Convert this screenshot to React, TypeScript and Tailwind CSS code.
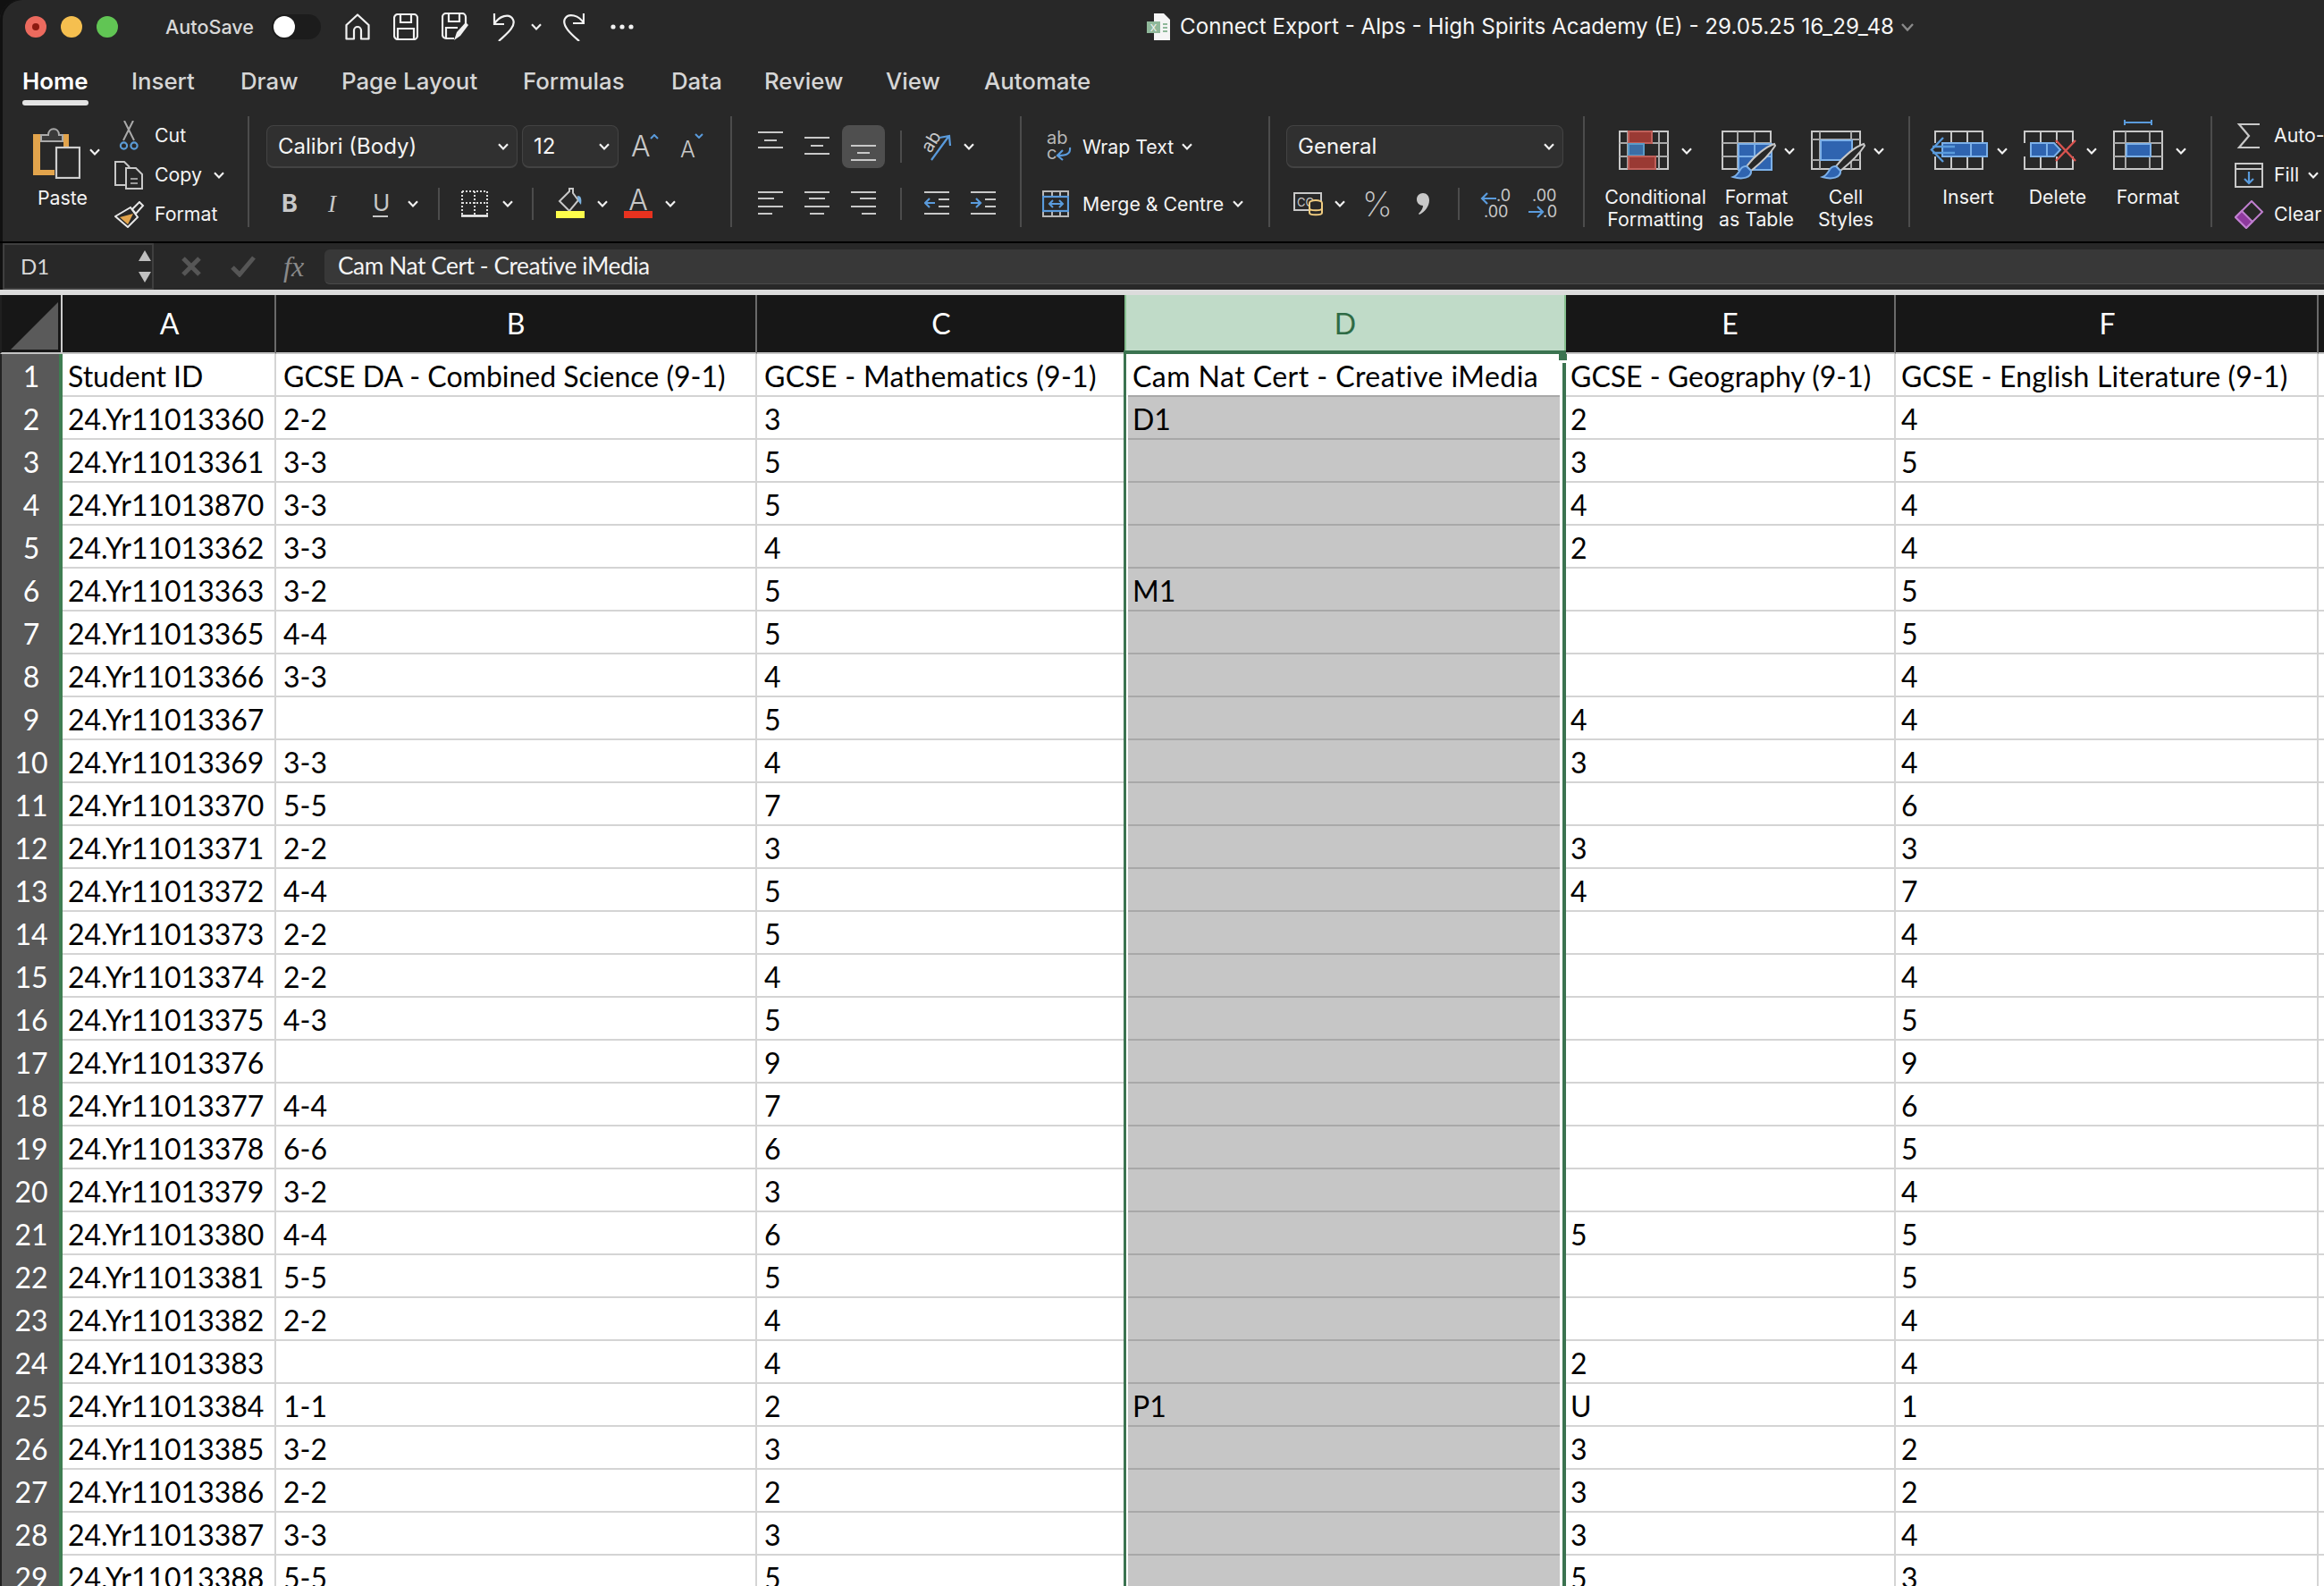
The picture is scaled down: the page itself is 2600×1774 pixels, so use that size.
import React from 'react'

const GREEN = 'border-[#3b7350]'

type Row = [string, string, string, string, string, string]

const rows: Row[] = [
  ['Student ID', 'GCSE DA - Combined Science (9-1)', 'GCSE - Mathematics (9-1)', 'Cam Nat Cert - Creative iMedia', 'GCSE - Geography (9-1)', 'GCSE - English Literature (9-1)'],
  ['24.Yr11013360', '2-2', '3', 'D1', '2', '4'],
  ['24.Yr11013361', '3-3', '5', '', '3', '5'],
  ['24.Yr11013870', '3-3', '5', '', '4', '4'],
  ['24.Yr11013362', '3-3', '4', '', '2', '4'],
  ['24.Yr11013363', '3-2', '5', 'M1', '', '5'],
  ['24.Yr11013365', '4-4', '5', '', '', '5'],
  ['24.Yr11013366', '3-3', '4', '', '', '4'],
  ['24.Yr11013367', '', '5', '', '4', '4'],
  ['24.Yr11013369', '3-3', '4', '', '3', '4'],
  ['24.Yr11013370', '5-5', '7', '', '', '6'],
  ['24.Yr11013371', '2-2', '3', '', '3', '3'],
  ['24.Yr11013372', '4-4', '5', '', '4', '7'],
  ['24.Yr11013373', '2-2', '5', '', '', '4'],
  ['24.Yr11013374', '2-2', '4', '', '', '4'],
  ['24.Yr11013375', '4-3', '5', '', '', '5'],
  ['24.Yr11013376', '', '9', '', '', '9'],
  ['24.Yr11013377', '4-4', '7', '', '', '6'],
  ['24.Yr11013378', '6-6', '6', '', '', '5'],
  ['24.Yr11013379', '3-2', '3', '', '', '4'],
  ['24.Yr11013380', '4-4', '6', '', '5', '5'],
  ['24.Yr11013381', '5-5', '5', '', '', '5'],
  ['24.Yr11013382', '2-2', '4', '', '', '4'],
  ['24.Yr11013383', '', '4', '', '2', '4'],
  ['24.Yr11013384', '1-1', '2', 'P1', 'U', '1'],
  ['24.Yr11013385', '3-2', '3', '', '3', '2'],
  ['24.Yr11013386', '2-2', '2', '', '3', '2'],
  ['24.Yr11013387', '3-3', '3', '', '3', '4'],
  ['24.Yr11013388', '5-5', '5', '', '5', '3'],
]

const tabs = [
  { label: 'Home', className: 'ml-[25px] w-[74px] font-semibold text-white' },
  { label: 'Insert', className: 'ml-[48px] w-[71px]' },
  { label: 'Draw', className: 'ml-[51px] w-[63px]' },
  { label: 'Page Layout', className: 'ml-[50px] w-[151px]' },
  { label: 'Formulas', className: 'ml-[52px] w-[114px]' },
  { label: 'Data', className: 'ml-[52px] w-[56px]' },
  { label: 'Review', className: 'ml-[48px] w-[87px]' },
  { label: 'View', className: 'ml-[49px] w-[59px]' },
  { label: 'Automate', className: 'ml-[51px] w-[119px]' },
]

function Chev({ className }: { className?: string }) {
  return (
    <svg width="12" height="8" viewBox="0 0 12 8" className={`shrink-0 ${className ?? ''}`}>
      <path d="M1 1.2 6 6.4 11 1.2" stroke="#f2f2f2" strokeWidth="2.2" fill="none" />
    </svg>
  )
}

function Sep({ className }: { className?: string }) {
  return <div className={`w-[2px] h-[36px] shrink-0 bg-[#4c4c4c] ${className ?? ''}`} />
}

function Combo({ label, className }: { label: string; className: string }) {
  return (
    <div className={`h-[48px] flex items-center justify-between rounded-lg bg-[#303030] border border-[#434343] border-b-2 ${className}`}>
      <span className="text-[24px] text-[#f4f4f4]">{label}</span>
      <Chev />
    </div>
  )
}

function AlignTop({ ys }: { ys: number[] }) {
  return (
    <svg width="28" height="48" viewBox="0 0 28 48" className="shrink-0">
      <path d={`M0 ${ys[0]}H28M7 ${ys[1]}H21M0 ${ys[2]}H28`} stroke="#c8c8c8" strokeWidth="2.2" />
    </svg>
  )
}

function AlignH({ kind }: { kind: 'left' | 'center' | 'right' }) {
  const d = {
    left: 'M0 5H28M0 12H18M0 21H28M0 29H16',
    center: 'M0 5H28M5 12H23M0 21H28M6 29H22',
    right: 'M0 5H28M10 12H28M0 21H28M12 29H28',
  }[kind]
  return (
    <svg width="28" height="36" viewBox="0 0 28 36" className="shrink-0">
      <path d={d} stroke="#c8c8c8" strokeWidth="2.2" />
    </svg>
  )
}

function Indent({ flip }: { flip?: boolean }) {
  return (
    <svg width="28" height="36" viewBox="0 0 28 36" className="shrink-0">
      <path d="M0 5H28M16 13H28M16 21H28M0 29H28" stroke="#c8c8c8" strokeWidth="2.2" />
      <path d={flip ? 'M0 17H11M6 12l5 5-5 5' : 'M12 17H1M6 12l-5 5 5 5'} stroke="#5a9bdc" strokeWidth="2.2" fill="none" />
    </svg>
  )
}

function TableIcon({ children, w = 56, v = [18, 37], h = [14, 29] }: { children?: React.ReactNode; w?: number; v?: number[]; h?: number[] }) {
  return (
    <svg width={w} height="44" viewBox={`0 0 ${w} 44`} className="shrink-0 overflow-visible">
      <rect x="1" y="1" width={w - 2} height="42" fill="none" stroke="#c8c8c8" strokeWidth="2" />
      {v.map((x) => (
        <path key={x} d={`M${x} 1V43`} stroke="#a8a8a8" strokeWidth="2" />
      ))}
      {h.map((y) => (
        <path key={y} d={`M1 ${y}H${w - 1}`} stroke="#a8a8a8" strokeWidth="2" />
      ))}
      {children}
    </svg>
  )
}

function Brush() {
  return (
    <g>
      <path d="M59 15C50 18 37 28 28 40L33 45C43 37 55 25 60 17Z" fill="#282828" stroke="#c8c8c8" strokeWidth="2" />
      <path d="M28 40C20 39 21 49 13 52C23 55 34 53 33 45Z" fill="#2f64b0" stroke="#7cb0e8" strokeWidth="2" />
    </g>
  )
}

function CondIcon() {
  return (
    <TableIcon v={[10, 27, 45]}>
      <rect x="11" y="1" width="26" height="13" fill="#9a3a34" stroke="#c0605a" strokeWidth="2" />
      <rect x="11" y="15" width="17" height="13" fill="#3b6ea5" stroke="#5a9bc8" strokeWidth="2" />
      <rect x="11" y="29" width="30" height="14" fill="#9a3a34" stroke="#c0605a" strokeWidth="2" />
    </TableIcon>
  )
}

function TableStyleIcon() {
  return (
    <TableIcon>
      <rect x="19" y="15" width="37" height="29" fill="#2f64b0" stroke="#7cb0e8" strokeWidth="2" />
      <path d="M37 15V44M19 29H56" stroke="#7cb0e8" strokeWidth="2" />
      <Brush />
    </TableIcon>
  )
}

function CellStyleIcon() {
  return (
    <TableIcon v={[10, 45]} h={[10, 33]}>
      <rect x="11" y="11" width="35" height="22" fill="#2f64b0" stroke="#7cb0e8" strokeWidth="2" />
      <Brush />
    </TableIcon>
  )
}

function InsertIcon() {
  return (
    <svg width="64" height="44" viewBox="0 0 64 44" className="shrink-0 overflow-visible">
      <path d="M5 14V1H58V14M5 29V43H58V29M23 1V14M41 1V14M23 29V43M41 29V43" fill="none" stroke="#c8c8c8" strokeWidth="2" />
      <rect x="13" y="14" width="50" height="15" fill="#2f64b0" stroke="#7cb0e8" strokeWidth="2" />
      <path d="M45 14V29" stroke="#7cb0e8" strokeWidth="2" />
      <path d="M14 8 1 21.5 14 35" fill="none" stroke="#5a9bdc" strokeWidth="2.4" />
      <path d="M2 18H27M2 25H27" stroke="#5a9bdc" strokeWidth="2.4" />
    </svg>
  )
}

function DeleteIcon() {
  return (
    <svg width="60" height="44" viewBox="0 0 60 44" className="shrink-0 overflow-visible">
      <path d="M1 14V1H55V14M1 29V43H55V29M19 1V14M37 1V14M19 29V43M37 29V43" fill="none" stroke="#c8c8c8" strokeWidth="2" />
      <path d="M8 14H34L41 21.5 34 29H8Z" fill="#2f64b0" stroke="#7cb0e8" strokeWidth="2" />
      <path d="M26 14V29" stroke="#7cb0e8" strokeWidth="2" />
      <path d="M36 11 58 34M58 11 36 34" stroke="#d9534f" strokeWidth="2.4" />
    </svg>
  )
}

function FormatCellIcon() {
  return (
    <TableIcon v={[14, 41]}>
      <rect x="15" y="15" width="27" height="14" fill="#2f64b0" stroke="#7cb0e8" strokeWidth="2" />
      <path d="M13 -9H43M13 -12V-6M43 -12V-6" stroke="#5a9bdc" strokeWidth="2" />
    </TableIcon>
  )
}

function LargeLabel({ lines }: { lines: string[] }) {
  return (
    <div className="text-[21.3px] leading-[25px] text-[#f4f4f4] text-center whitespace-nowrap">
      {lines.map((l) => (
        <div key={l}>{l}</div>
      ))}
    </div>
  )
}

function TitleBar() {
  return (
    <div className="h-[60px] flex items-center shrink-0">
      <div className="ml-[28px] flex gap-4">
        <div className="w-6 h-6 rounded-full bg-[#ec6a5e] flex items-center justify-center">
          <div className="w-2 h-2 rounded-full bg-[#8c1a10]" />
        </div>
        <div className="w-6 h-6 rounded-full bg-[#f5bf4f]" />
        <div className="w-6 h-6 rounded-full bg-[#61c554]" />
      </div>
      <span className="ml-[53px] w-[100px] text-[21.6px] font-medium text-[#d8d8d8] whitespace-nowrap">AutoSave</span>
      <div className="ml-[19px] w-[55px] h-[28px] rounded-full bg-[#1c1c1c] flex items-center pl-[2px]">
        <div className="w-6 h-6 rounded-full bg-white" />
      </div>
      <svg width="28" height="30" viewBox="0 0 28 30" className="ml-[27px]">
        <path d="M1.5 28.5V13L14 1.5 26.5 13V28.5H18V19a4 4 0 0 0-8 0V28.5Z" fill="none" stroke="#f2f2f2" strokeWidth="2.2" strokeLinejoin="round" />
      </svg>
      <svg width="28" height="30" viewBox="0 0 28 30" className="ml-[26px]">
        <rect x="1" y="1" width="26" height="28" rx="4" fill="none" stroke="#f2f2f2" strokeWidth="2.2" />
        <path d="M8 1V10H20V1M5 29V17H23V29" fill="none" stroke="#f2f2f2" strokeWidth="2.2" />
      </svg>
      <svg width="30" height="32" viewBox="0 0 30 32" className="ml-[26px]">
        <path d="M14 29H5a4 4 0 0 1-4-4V5a4 4 0 0 1 4-4H23a4 4 0 0 1 4 4V13M8 1V10H20V1M5 29V17H18" fill="none" stroke="#f2f2f2" strokeWidth="2.2" />
        <path d="M14 31 17 22 27 11 30 14 21 26Z" fill="#f2f2f2" />
      </svg>
      <svg width="27" height="32" viewBox="0 0 27 32" className="ml-[26px]">
        <path d="M3 1V13H14M3 13C8 4 20 0 24 8 28 16 14 26 8 32" fill="none" stroke="#f2f2f2" strokeWidth="2.2" />
      </svg>
      <Chev className="ml-[17px]" />
      <svg width="25" height="32" viewBox="0 0 25 32" className="ml-[23px]">
        <path d="M24 1V12H12M24 12C19 3 7 0 3 7 -1 15 11 25 19 32" fill="none" stroke="#f2f2f2" strokeWidth="2.2" />
      </svg>
      <svg width="26" height="6" viewBox="0 0 26 6" className="ml-[29px]">
        <circle cx="3" cy="3" r="2.6" fill="#f2f2f2" />
        <circle cx="13" cy="3" r="2.6" fill="#f2f2f2" />
        <circle cx="23" cy="3" r="2.6" fill="#f2f2f2" />
      </svg>
      <svg width="26" height="30" viewBox="0 0 26 30" className="ml-[574px] overflow-visible">
        <path d="M8 0H19L26 7V30H8Z" fill="#f5f5f5" />
        <rect x="0" y="9" width="15" height="13" fill="#8fb89a" />
        <text x="7.5" y="20" textAnchor="middle" fontSize="11" fill="#f5f5f5">X</text>
        <path d="M18 12H23M18 16H23M18 20H23" stroke="#8fb89a" strokeWidth="2" />
      </svg>
      <span className="ml-[11px] w-[798px] text-[24.2px] text-[#f6f6f6] whitespace-nowrap">
        Connect Export - Alps - High Spirits Academy (E) - 29.05.25 16_29_48
      </span>
      <svg width="14" height="9" viewBox="0 0 14 9" className="ml-[9px]">
        <path d="M1 1 7 7.5 13 1" stroke="#8a8a8a" strokeWidth="2.4" fill="none" />
      </svg>
    </div>
  )
}

function Tabs() {
  return (
    <div className="h-[60px] flex shrink-0 text-[25.8px] leading-[36px] font-medium text-[#d6d6d6]">
      {tabs.map((t) => (
        <div key={t.label} className={`pt-[13px] whitespace-nowrap ${t.className}`}>
          {t.label}
          {t.label === 'Home' && <div className="mt-[3px] h-[6px] rounded-full bg-[#e4e4e4]" />}
        </div>
      ))}
    </div>
  )
}

function ClipboardGroup() {
  return (
    <div className="w-[279px] shrink-0 border-r-2 border-[#4c4c4c] flex">
      <div className="ml-[36px] pt-[10px] w-[92px]">
        <div className="flex items-center">
          <svg width="54" height="60" viewBox="0 0 54 60" className="shrink-0">
            <path d="M1 10H41V24H35V16H9V50H25V56H1Z" fill="#e2a44c" />
            <path d="M10 18V11H18C18 2 30 2 30 11H34V18Z" fill="#3a3a3a" stroke="#aaaaaa" strokeWidth="2" />
            <rect x="27" y="25" width="26" height="34" fill="#282828" stroke="#cfcfcf" strokeWidth="2.2" />
          </svg>
          <Chev className="ml-[10px]" />
        </div>
        <div className="mt-[8px] w-[68px] text-center text-[21.3px] leading-[26px] text-[#f4f4f4]">Paste</div>
      </div>
      <div className="flex flex-col text-[21.3px] text-[#f4f4f4]">
        <div className="h-[44px] shrink-0 flex items-center">
          <svg width="45" height="34" viewBox="0 0 45 34" className="shrink-0">
            <path d="M11 0 22 22M21 0 10 22" stroke="#aaaaaa" strokeWidth="2" />
            <circle cx="10.5" cy="28" r="3.6" fill="none" stroke="#5b9bd5" strokeWidth="2.2" />
            <circle cx="22" cy="28" r="3.6" fill="none" stroke="#5b9bd5" strokeWidth="2.2" />
          </svg>
          Cut
        </div>
        <div className="h-[44px] shrink-0 flex items-center">
          <svg width="45" height="32" viewBox="0 0 45 32" className="shrink-0">
            <path d="M12 27H1V1H11L17 7" fill="none" stroke="#c8c8c8" strokeWidth="2" />
            <path d="M13 8H24L31 15V31H13Z" fill="none" stroke="#c8c8c8" strokeWidth="2" />
            <path d="M18 20H26M18 25H26" stroke="#9a9a9a" strokeWidth="2" />
          </svg>
          Copy
          <Chev className="ml-[13px]" />
        </div>
        <div className="h-[44px] shrink-0 flex items-center">
          <svg width="45" height="30" viewBox="0 0 45 30" className="shrink-0">
            <path d="M1 17 18 7 26 18 15 29Z" fill="#282828" stroke="#e8e8e8" strokeWidth="2" />
            <path d="M6 18 21 14 15 26Z" fill="#e2a44c" />
            <path d="M20 9 28 1 32 5 24 14Z" fill="#282828" stroke="#e8e8e8" strokeWidth="2" />
          </svg>
          Format
        </div>
      </div>
    </div>
  )
}

function FontGroup() {
  return (
    <div className="w-[540px] shrink-0 border-r-2 border-[#4c4c4c] pt-[10px]">
      <div className="flex items-center h-[48px]">
        <Combo label="Calibri (Body)" className="ml-[19px] w-[281px] pl-[12px] pr-[9px]" />
        <Combo label="12" className="ml-[5px] w-[108px] pl-[12px] pr-[9px]" />
        <div className="ml-[14px] w-[31px] flex items-start">
          <span className="text-[32px] leading-[36px] font-light text-[#c8c8c8]">A</span>
          <svg width="10" height="6" viewBox="0 0 10 6" className="mt-[4px] -ml-[1px] shrink-0">
            <path d="M1 5 5 1 9 5" stroke="#5a9bdc" strokeWidth="2" fill="none" />
          </svg>
        </div>
        <div className="ml-[24px] w-[25px] flex items-start">
          <span className="mt-[6px] text-[25px] leading-[30px] font-light text-[#c8c8c8]">A</span>
          <svg width="10" height="6" viewBox="0 0 10 6" className="mt-[3px] -ml-[1px] shrink-0">
            <path d="M1 1 5 5 9 1" stroke="#5a9bdc" strokeWidth="2" fill="none" />
          </svg>
        </div>
      </div>
      <div className="mt-[22px] flex items-center h-[36px] text-[#c8c8c8]">
        <span className="ml-[36px] w-[15px] text-[27px] font-bold leading-[36px]">B</span>
        <span className="ml-[37px] w-[14px] text-[27px] italic leading-[36px] [font-family:'Liberation_Serif',serif]">I</span>
        <span className="ml-[36px] w-[17px] text-[26px] leading-[28px] border-b-2 border-[#c8c8c8]">U</span>
        <Chev className="ml-[22px]" />
        <Sep className="ml-[22px]" />
        <svg width="30" height="30" viewBox="0 0 30 30" className="ml-[24px] shrink-0">
          <path d="M1 1H29V27M1 1V27M15 1V27M1 14H29" fill="none" stroke="#dddddd" strokeWidth="2" strokeDasharray="2 2" />
          <path d="M0 28.5H30" stroke="#ffffff" strokeWidth="2.4" />
        </svg>
        <Chev className="ml-[16px]" />
        <Sep className="ml-[21px]" />
        <svg width="32" height="36" viewBox="0 0 32 36" className="ml-[25px] shrink-0">
          <path d="M4 15 15 4V1H19V6L25 14 15 26Z" fill="none" stroke="#c8c8c8" strokeWidth="2" />
          <path d="M24 9C28 9 29 12 28 19 25 16 24 13 24 9Z" fill="#7db3e0" />
          <rect x="0" y="26" width="32" height="8" fill="#fdfd4b" />
        </svg>
        <Chev className="ml-[14px]" />
        <div className="ml-[18px] w-[32px] h-[36px] flex flex-col items-center">
          <span className="h-[26px] text-[32px] leading-[28px] font-light">A</span>
          <div className="w-full h-[8px] bg-[#e8321f]" />
        </div>
        <Chev className="ml-[14px]" />
      </div>
    </div>
  )
}

function AlignGroup() {
  return (
    <div className="w-[324px] shrink-0 border-r-2 border-[#4c4c4c] pt-[10px]">
      <div className="flex items-center h-[48px]">
        <div className="ml-[29px]">
          <AlignTop ys={[8, 17, 25]} />
        </div>
        <div className="ml-[24px]">
          <AlignTop ys={[14, 23, 32]} />
        </div>
        <div className="ml-[14px] w-[48px] h-[48px] rounded-lg bg-[#4f4f4f] flex justify-center">
          <AlignTop ys={[23, 31, 39]} />
        </div>
        <Sep className="ml-[17px]" />
        <svg width="33" height="30" viewBox="0 0 33 30" className="ml-[23px] shrink-0 overflow-visible">
          <text x="9" y="23" fontSize="20" fill="#c8c8c8" transform="rotate(-58 9 23)">ab</text>
          <path d="M10 30 29 4M19 5 30 3 31 14" stroke="#5a9bdc" strokeWidth="2.2" fill="none" />
        </svg>
        <Chev className="ml-[13px]" />
      </div>
      <div className="mt-[22px] flex items-center h-[36px]">
        <div className="ml-[29px]">
          <AlignH kind="left" />
        </div>
        <div className="ml-[24px]">
          <AlignH kind="center" />
        </div>
        <div className="ml-[24px]">
          <AlignH kind="right" />
        </div>
        <Sep className="ml-[27px]" />
        <div className="ml-[25px]">
          <Indent />
        </div>
        <div className="ml-[24px]">
          <Indent flip />
        </div>
      </div>
    </div>
  )
}

function WrapGroup() {
  return (
    <div className="w-[278px] shrink-0 border-r-2 border-[#4c4c4c] pt-[10px] text-[21.3px] text-[#f4f4f4]">
      <div className="flex items-center h-[48px] whitespace-nowrap">
        <svg width="28" height="30" viewBox="0 0 28 30" className="ml-[28px] shrink-0 overflow-visible">
          <text x="0" y="12" fontSize="20" fill="#b8b8b8">ab</text>
          <text x="0" y="29" fontSize="20" fill="#b8b8b8">c</text>
          <path d="M26 16C27 23 22 25 13 25M18 19 12 25 18 30" stroke="#5a9bdc" strokeWidth="2.2" fill="none" />
        </svg>
        <span className="ml-[12px] mt-[2px] w-[99px]">Wrap Text</span>
        <Chev className="ml-[12px]" />
      </div>
      <div className="mt-[22px] flex items-center h-[36px] whitespace-nowrap">
        <svg width="30" height="30" viewBox="0 0 30 30" className="ml-[23px] shrink-0">
          <rect x="1" y="1" width="28" height="28" fill="none" stroke="#b8b8b8" strokeWidth="2" />
          <path d="M11 1V7M20 1V7M11 23V29M20 23V29" stroke="#b8b8b8" strokeWidth="2" />
          <rect x="1" y="7" width="28" height="16" fill="#282828" stroke="#5a9bdc" strokeWidth="2.2" />
          <path d="M9 15H22M12 11 8 15 12 19M19 11 23 15 19 19" stroke="#5a9bdc" strokeWidth="2" fill="none" />
        </svg>
        <span className="ml-[15px] mt-[2px] w-[157px]">Merge &amp; Centre</span>
        <Chev className="ml-[11px]" />
      </div>
    </div>
  )
}

function NumberGroup() {
  return (
    <div className="w-[352px] shrink-0 border-r-2 border-[#4c4c4c] pt-[10px]">
      <div className="flex items-center h-[48px]">
        <Combo label="General" className="ml-[18px] w-[310px] pl-[12px] pr-[9px]" />
      </div>
      <div className="mt-[22px] flex items-center h-[36px]">
        <svg width="33" height="26" viewBox="0 0 33 26" className="ml-[26px] shrink-0 overflow-visible">
          <rect x="1" y="1" width="30" height="19" fill="none" stroke="#c8c8c8" strokeWidth="2" />
          <text x="4" y="16" fontSize="13" fill="#c8c8c8">CC</text>
          <ellipse cx="25" cy="12" rx="7" ry="3" fill="#282828" stroke="#f0cc80" strokeWidth="2" />
          <path d="M18 12V23C18 26 32 26 32 23V12M18 18C18 21 32 21 32 18" fill="#282828" stroke="#f0cc80" strokeWidth="2" />
        </svg>
        <Chev className="ml-[13px]" />
        <span className="ml-[19px] w-[30px] text-[38px] leading-[36px] font-extralight text-[#c8c8c8]">%</span>
        <svg width="14" height="24" viewBox="0 0 14 24" className="ml-[31px] shrink-0">
          <path d="M7 0C11 0 14 3 14 8 14 15 9 21 3 24L2 23C5 20 7 17 7 14 3 14 0 11 0 7 0 3 3 0 7 0Z" fill="#c8c8c8" />
        </svg>
        <Sep className="ml-[32px]" />
        <svg width="32" height="34" viewBox="0 0 32 34" className="ml-[23px] shrink-0 overflow-visible">
          <text x="18" y="14" fontSize="18" fill="#c8c8c8">.0</text>
          <text x="4" y="32" fontSize="18" fill="#c8c8c8">.00</text>
          <path d="M18 11H2M8 5 2 11 8 17" stroke="#5a9bdc" strokeWidth="2.2" fill="none" />
        </svg>
        <svg width="30" height="34" viewBox="0 0 30 34" className="ml-[22px] shrink-0 overflow-visible">
          <text x="4" y="14" fontSize="18" fill="#c8c8c8">.00</text>
          <text x="16" y="32" fontSize="18" fill="#c8c8c8">.0</text>
          <path d="M0 26H16M10 20 16 26 10 32" stroke="#5a9bdc" strokeWidth="2.2" fill="none" />
        </svg>
      </div>
    </div>
  )
}

function StylesGroup() {
  return (
    <div className="w-[364px] shrink-0 border-r-2 border-[#4c4c4c] pt-[16px] pl-[17px] flex">
      <div className="w-[124px]">
        <div className="h-[62px] flex">
          <div className="ml-[21px]"><CondIcon /></div>
          <Chev className="ml-[14px] mt-[19px]" />
        </div>
        <LargeLabel lines={['Conditional', 'Formatting']} />
      </div>
      <div className="w-[102px]">
        <div className="h-[62px] flex">
          <div className="ml-[12px]"><TableStyleIcon /></div>
          <Chev className="ml-[14px] mt-[19px]" />
        </div>
        <LargeLabel lines={['Format', 'as Table']} />
      </div>
      <div className="w-[98px]">
        <div className="h-[62px] flex">
          <div className="ml-[10px]"><CellStyleIcon /></div>
          <Chev className="ml-[14px] mt-[19px]" />
        </div>
        <LargeLabel lines={['Cell', 'Styles']} />
      </div>
    </div>
  )
}

function CellsGroup() {
  return (
    <div className="w-[338px] shrink-0 border-r-2 border-[#4c4c4c] pt-[16px] pl-[15px] flex">
      <div className="w-[100px]">
        <div className="h-[62px] flex">
          <div className="ml-[8px]"><InsertIcon /></div>
          <Chev className="ml-[10px] mt-[19px]" />
        </div>
        <LargeLabel lines={['Insert']} />
      </div>
      <div className="w-[100px]">
        <div className="h-[62px] flex">
          <div className="ml-[12px]"><DeleteIcon /></div>
          <Chev className="ml-[10px] mt-[19px]" />
        </div>
        <LargeLabel lines={['Delete']} />
      </div>
      <div className="w-[102px]">
        <div className="h-[62px] flex">
          <div className="ml-[12px]"><FormatCellIcon /></div>
          <Chev className="ml-[14px] mt-[19px]" />
        </div>
        <LargeLabel lines={['Format']} />
      </div>
    </div>
  )
}

function EditGroup() {
  return (
    <div className="pl-[25px] flex flex-col text-[21.3px] text-[#f4f4f4] whitespace-nowrap">
      <div className="h-[44px] shrink-0 flex items-center">
        <svg width="44" height="30" viewBox="0 0 44 30" className="shrink-0">
          <path d="M28 2H5L16 15 5 28H28" fill="none" stroke="#c8c8c8" strokeWidth="2.2" />
        </svg>
        Auto-
      </div>
      <div className="h-[44px] shrink-0 flex items-center">
        <svg width="44" height="28" viewBox="0 0 44 28" className="shrink-0">
          <rect x="1" y="1" width="30" height="26" fill="none" stroke="#c8c8c8" strokeWidth="2" />
          <path d="M1 7H31" stroke="#c8c8c8" strokeWidth="2" />
          <path d="M16 10V23M11 18 16 23 21 18" fill="none" stroke="#5a9bdc" strokeWidth="2.2" />
        </svg>
        Fill
        <Chev className="ml-[10px]" />
      </div>
      <div className="h-[44px] shrink-0 flex items-center">
        <svg width="44" height="32" viewBox="0 0 44 32" className="shrink-0">
          <path d="M19 1 31 13 13 31 1 19Z" fill="none" stroke="#c07fd0" strokeWidth="2" />
          <path d="M8 12 20 24 13 31 1 19Z" fill="#8e3a9e" stroke="#c07fd0" strokeWidth="2" />
        </svg>
        Clear
      </div>
    </div>
  )
}

function Ribbon() {
  return (
    <div className="h-[150px] pt-[10px] shrink-0">
      <div className="h-[124px] flex">
        <ClipboardGroup />
        <FontGroup />
        <AlignGroup />
        <WrapGroup />
        <NumberGroup />
        <StylesGroup />
        <CellsGroup />
        <EditGroup />
      </div>
    </div>
  )
}

function FormulaBar() {
  return (
    <div className="h-[54px] shrink-0 flex items-center border-t-2 border-black [font-family:Lato,sans-serif]">
      <div className="ml-[3px] w-[169px] h-[52px] border-2 border-[#3f3f3f] flex items-center justify-between pl-[18px] pr-[1px]">
        <span className="text-[24px] text-[#d8d8d8]">D1</span>
        <svg width="14" height="36" viewBox="0 0 14 36">
          <path d="M7 0 14 12H0ZM0 24H14L7 36Z" fill="#c0c0c0" />
        </svg>
      </div>
      <svg width="22" height="22" viewBox="0 0 22 22" className="ml-[31px]">
        <path d="M2 2 20 20M20 2 2 20" stroke="#565656" strokeWidth="5" />
      </svg>
      <svg width="28" height="24" viewBox="0 0 28 24" className="ml-[33px]">
        <path d="M2 13 10 21 26 2" stroke="#565656" strokeWidth="5" fill="none" />
      </svg>
      <span className="ml-[31px] w-[34px] text-[32px] italic leading-[40px] text-[#8a8a8a] [font-family:'Liberation_Serif',serif]">fx</span>
      <div className="ml-[12px] flex-1 h-[39px] rounded-l-md bg-[#383838] border-b border-[#4a4a4a] flex items-center pl-[15px]">
        <span className="text-[26.3px] text-[#f4f4f4] tracking-[-0.45px]">Cam Nat Cert - Creative iMedia</span>
      </div>
    </div>
  )
}

function Sheet() {
  return (
    <div className="flex-1 min-h-0 bg-white text-black [font-family:Lato,sans-serif] text-[32px] leading-[42px] whitespace-nowrap">
      <div className="h-[66px] flex bg-[#171717] text-white text-center leading-[64px]">
        <div className="w-[70px] border-l-2 border-r-2 border-b-2 border-l-[#202020] border-r-[#cccccc] border-b-[#c4c4c4] flex items-end justify-end pr-[3px] pb-[3px]">
          <svg width="53" height="53" viewBox="0 0 53 53">
            <path d="M0 53 53 0V53Z" fill="#5a5a5a" />
          </svg>
        </div>
        <div className="w-[239px] pl-[2px] border-r-2 border-b-2 border-r-[#6a6a6a] border-b-[#c4c4c4]">A</div>
        <div className="w-[538px] border-r-2 border-b-2 border-r-[#6a6a6a] border-b-[#c4c4c4]">B</div>
        <div className="w-[410px] pl-[2px] border-b-2 border-b-[#c4c4c4]">C</div>
        <div className={`w-[495px] pl-px border-b-4 ${GREEN}`}>
          <div className="h-full bg-[#c0dbc8] text-[#2f6b45] border-x-2 border-[#86c08f]">D</div>
        </div>
        <div className="w-[369px] border-r-2 border-b-2 border-r-[#6a6a6a] border-b-[#c4c4c4]">E</div>
        <div className="w-[473px] pl-[2px] border-r-2 border-b-2 border-r-[#6a6a6a] border-b-[#c4c4c4]">F</div>
        <div className="flex-1 border-b-2 border-b-[#c4c4c4]" />
      </div>
      {rows.map((r, i) => (
        <div key={i} className="h-[48px] flex">
          <div className="w-[70px] pt-[4px] pl-[2px] bg-[#595959] text-white text-center border-l-2 border-l-[#222222] border-r-4 border-r-[#3f7d52]">
            {i + 1}
          </div>
          <div className="w-[239px] pt-[4px] pl-[6px] border-r-2 border-b-2 border-[#d4d4d4]">{r[0]}</div>
          <div className="w-[538px] pt-[4px] pl-[8px] border-r-2 border-b-2 border-[#d4d4d4]">{r[1]}</div>
          <div className={`w-[410px] pt-[4px] pl-[8px] border-b-2 border-[#d4d4d4] ${i === 0 ? 'tracking-[0.3px]' : ''}`}>{r[2]}</div>
          <div className={`relative w-[495px] pl-[2px] pr-[3px] border-l-[3px] border-r-[4px] ${GREEN}`}>
            {i === 0 && (
              <div className="absolute -right-[5px] top-0 w-[9px] h-[10px] bg-[#3b7350] border-b-[3px] border-white" />
            )}
            <div className={`h-full pt-[4px] pl-[5px] border-b-2 border-[#a8a8a8] ${i === 0 ? 'tracking-[0.45px]' : 'bg-[#c6c6c6]'}`}>
              {r[3]}
            </div>
          </div>
          <div className="w-[369px] pt-[4px] pl-[5px] border-r-2 border-b-2 border-[#d4d4d4]">{r[4]}</div>
          <div className={`w-[473px] pt-[4px] pl-[6px] border-r-2 border-b-2 border-[#d4d4d4] ${i === 0 ? 'tracking-[0.16px]' : ''}`}>{r[5]}</div>
          <div className="flex-1 border-b-2 border-[#d4d4d4]" />
        </div>
      ))}
    </div>
  )
}

export default function App() {
  return (
    <div className="w-[2600px] h-[1774px] overflow-hidden bg-[#111111]">
      <div className="w-full h-full flex flex-col bg-[#282828] rounded-tl-[22px] overflow-hidden shadow-[inset_3px_0_0_#111111] [font-family:Inter,sans-serif]">
        <TitleBar />
        <Tabs />
        <Ribbon />
        <FormulaBar />
        <div className="h-[6px] shrink-0 bg-[#dcdcdc]" />
        <Sheet />
      </div>
    </div>
  )
}
